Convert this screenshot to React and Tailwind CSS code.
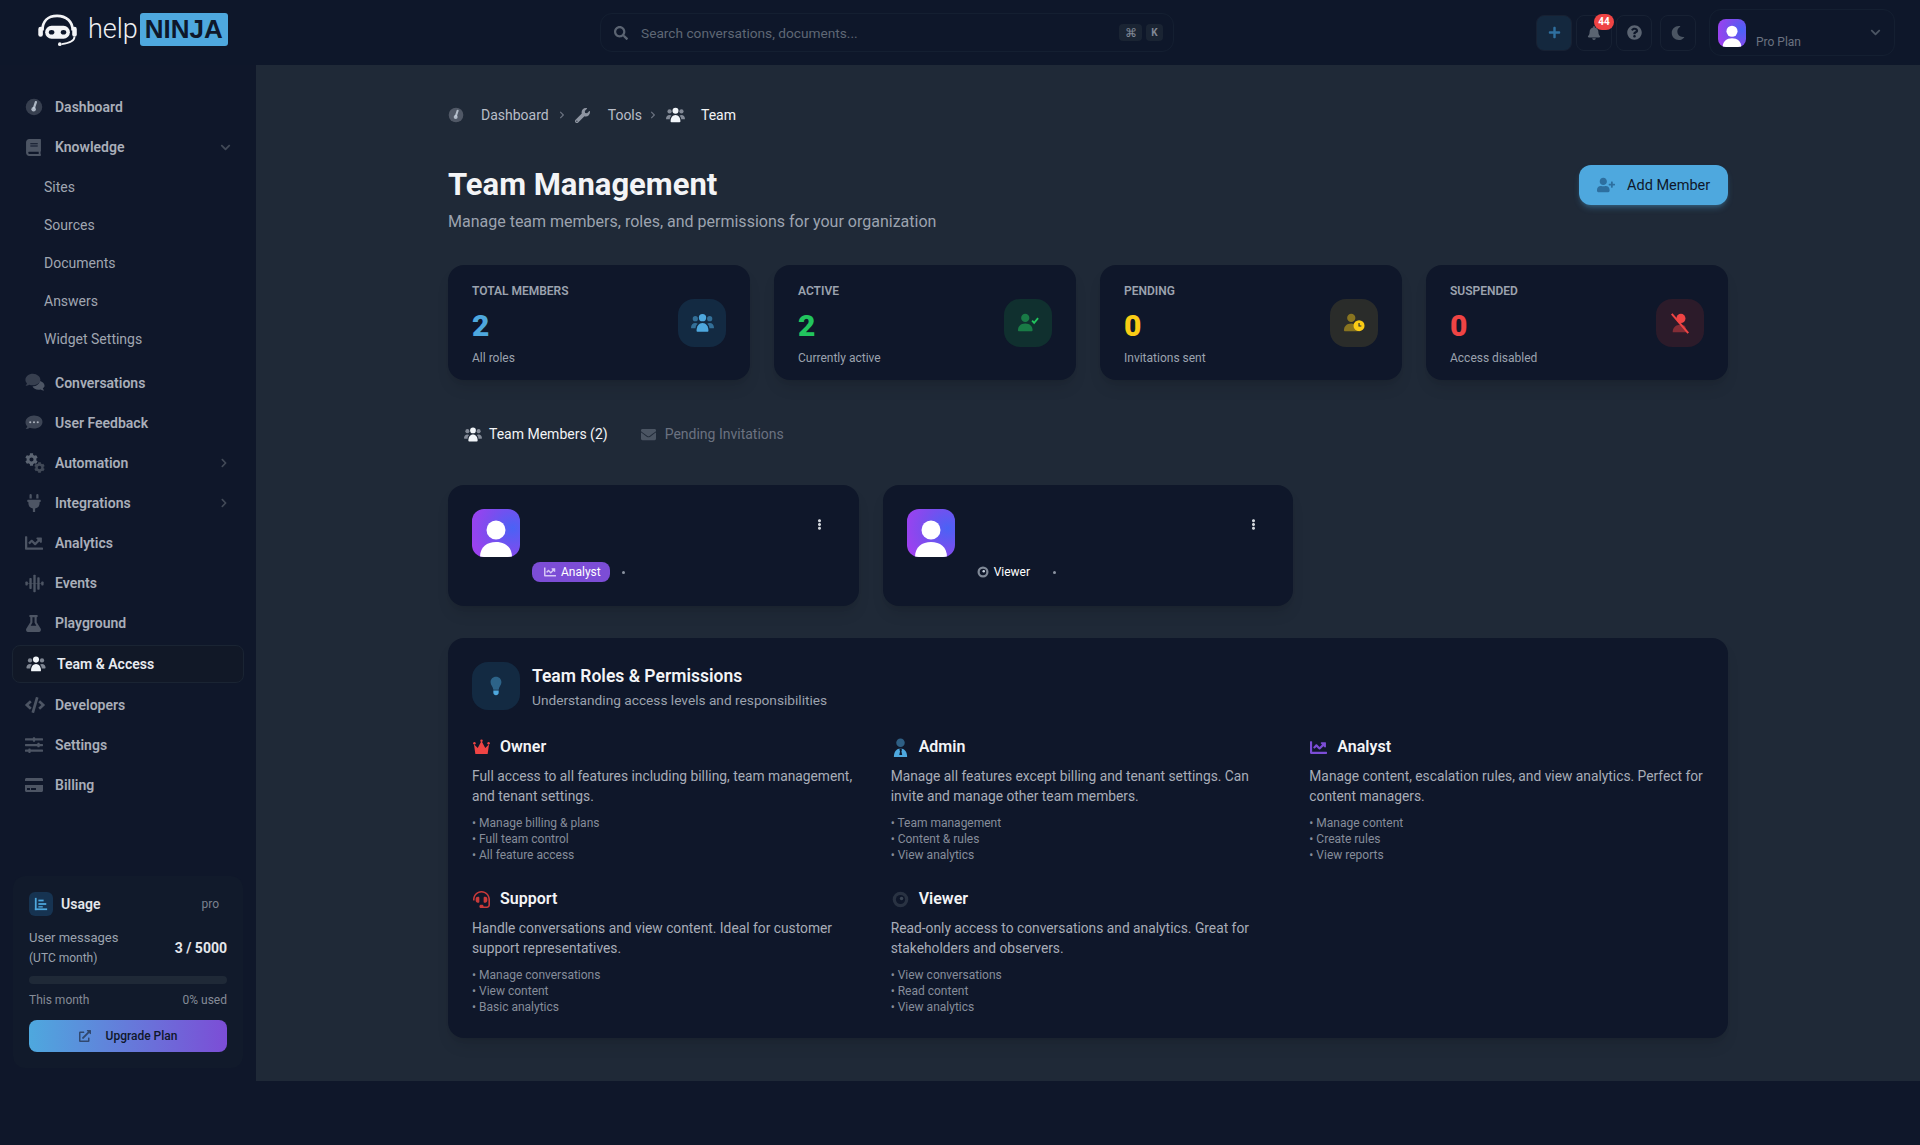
import React from 'react';
import {
  FaBook,
  FaChartLine,
  FaChevronDown,
  FaChevronRight,
  FaCode,
  FaCog,
  FaCreditCard,
  FaEllipsisV,
  FaEnvelope,
  FaExternalLinkAlt,
  FaFlask,
  FaHeadset,
  FaMoon,
  FaPlug,
  FaPlus,
  FaQuestionCircle,
  FaSearch,
  FaSlidersH,
  FaUserPlus,
  FaWrench,
  FaBell,
} from 'react-icons/fa';

const Gauge = ({ className }) => (
  <svg viewBox="0 0 24 24" className={className}>
    <circle cx="12" cy="12" r="11" fill="currentColor" opacity="0.65" />
    <path d="M14.5 5.5 12 13" stroke="#cbd5e1" strokeWidth="3" strokeLinecap="round" opacity="0.8" />
    <circle cx="11.5" cy="15" r="3" fill="#cbd5e1" opacity="0.8" />
  </svg>
);

const UsersDuo = ({ className, main = 'currentColor', side = 'currentColor', sideOpacity = 0.55 }) => (
  <svg viewBox="0 0 24 20" className={className}>
    <g fill={side} opacity={sideOpacity}>
      <circle cx="4.5" cy="5.5" r="2.7" />
      <circle cx="19.5" cy="5.5" r="2.7" />
      <path d="M0 15c0-3 2-5 4.5-5 1 0 1.800.300 2.500.800C5.500 12 4.800 13.500 4.800 15.500H1c-.6 0-1-.000-1-.500z" />
      <path d="M24 15c0-3-2-5-4.500-5-1 0-1.800.300-2.500.800 1.500 1.200 2.200 2.700 2.200 4.700H23c.6 0 1-.000 1-.500z" />
    </g>
    <g fill={main}>
      <circle cx="12" cy="4.500" r="3.800" />
      <path d="M5.800 18c0-4.500 2.500-8 6.200-8s6.200 3.500 6.200 8c0 .800-.400 1.200-1.200 1.200H7c-.800 0-1.200-.400-1.200-1.200z" />
    </g>
  </svg>
);

const Waveform = ({ className }) => (
  <svg viewBox="0 0 24 24" className={className} fill="currentColor">
    <rect x="0.500" y="9.500" width="3" height="5" rx="1" />
    <rect x="5.500" y="5" width="3" height="14" rx="1" />
    <rect x="10.500" y="1" width="3" height="22" rx="1" />
    <rect x="15.500" y="4" width="3" height="16" rx="1" />
    <rect x="20.500" y="9.500" width="3" height="5" rx="1" />
    <rect x="1" y="11.300" width="22" height="1.400" opacity="0.5" />
  </svg>
);

const Comments = ({ className }) => (
  <svg viewBox="0 0 24 24" className={className} fill="currentColor">
    <path d="M9.500 1C4.500 1 .500 4.200.500 8.200c0 1.700.700 3.200 1.900 4.400-.400 1.100-1.400 2.300-1.900 2.800 1.800 0 3.500-.700 4.500-1.400 1.300.500 2.900.800 4.500.800 5 0 9-3.200 9-6.600S14.500 1 9.500 1z" opacity="0.65" />
    <path d="M23.500 15.500c0-3-2.500-5.300-5.500-6-.700 3.500-4.400 6.300-9 6.500 1 2.500 3.800 4.200 7 4.200 1 0 2-.200 2.900-.500.900.700 2.600 1.300 4.100 1.300-.500-.600-1.400-1.700-1.600-2.600 1.300-.900 2.100-2.400 2.100-2.900z" />
  </svg>
);

const Feedback = ({ className }) => (
  <svg viewBox="0 0 24 24" className={className}>
    <path d="M12 2C5.700 2 .700 6 .700 11c0 2.100.900 4 2.400 5.500-.500 1.500-1.700 2.900-2.400 3.500 2.300 0 4.300-.900 5.600-1.800 1.700.700 3.600 1.100 5.700 1.100 6.300 0 11.300-4 11.300-8.800S18.300 2 12 2z" fill="currentColor" opacity="0.75" />
    <circle cx="7" cy="11" r="1.400" fill="#aab0bb" />
    <circle cx="12" cy="11" r="1.400" fill="#aab0bb" />
    <circle cx="17" cy="11" r="1.400" fill="#aab0bb" />
  </svg>
);

const Cogs = () => (
  <span className="relative block size-[20px]">
    <FaCog className="absolute top-0 left-0 size-[13px] text-[#5b6472]" />
    <FaCog className="absolute right-0 bottom-0 size-[11px] text-[#414957]" />
  </span>
);

const UserCheck = ({ className }) => (
  <svg viewBox="0 0 24 20" className={className}>
    <g fill="#22c55e" opacity="0.5">
      <circle cx="9" cy="5" r="4.500" />
      <path d="M1 18.500C1 14 4 11 9 11s8 3 8 7.500c0 .600-.400 1-1 1H2c-.600 0-1-.400-1-1z" />
    </g>
    <path d="m16.500 8 2.200 2.400 4.300-5.200" stroke="#22c55e" strokeWidth="2" fill="none" />
  </svg>
);

const UserClock = ({ className }) => (
  <svg viewBox="0 0 24 20" className={className}>
    <g fill="#facc15" opacity="0.45">
      <circle cx="9" cy="5" r="4.500" />
      <path d="M1 18.500C1 14 4 11 9 11s8 3 8 7.500c0 .600-.400 1-1 1H2c-.600 0-1-.400-1-1z" />
    </g>
    <circle cx="17.500" cy="13.500" r="6" fill="#facc15" />
    <path d="M17.500 10.500v3.300h2.500" stroke="#1f2937" strokeWidth="1.200" fill="none" />
  </svg>
);

const UserSlash = ({ className }) => (
  <svg viewBox="0 0 24 24" className={className}>
    <circle cx="13" cy="7" r="5" fill="#ef4444" />
    <path d="M4 22c0-5 3.500-8 8.500-8 2 0 3.700.500 5 1.400L20 22z" fill="#ef4444" opacity="0.45" />
    <path d="M3 2l18 21" stroke="#ef4444" strokeWidth="2.200" />
  </svg>
);

const Crown = ({ className }) => (
  <svg viewBox="0 0 18 18" className={className} fill="#ef4444">
    <path d="M1 5.500 5 9.500 9 2l4 7.500 4-4L15.500 16h-13z" />
    <circle cx="1.500" cy="4.500" r="1.300" />
    <circle cx="9" cy="1.800" r="1.300" />
    <circle cx="16.500" cy="4.500" r="1.300" />
  </svg>
);

const UserTie = ({ className }) => (
  <svg viewBox="0 0 18 20" className={className}>
    <circle cx="9" cy="5" r="4.500" fill="#4ea8de" opacity="0.5" />
    <path d="M2 20c0-6 3-9 7-9s7 3 7 9z" fill="#4ea8de" />
    <path d="M8 11h2l.500 2-.500 1 .800 4H7.700l.800-4-.500-1z" fill="#0f172a" />
  </svg>
);

const Bulb = ({ className }) => (
  <svg viewBox="0 0 16 24" className={className}>
    <path d="M8 1C4 1 1.500 4 1.500 7.500c0 3.500 2.800 5 3.300 9h6.400c.500-4 3.300-5.500 3.300-9C14.500 4 12 1 8 1z" fill="#4ea8de" opacity="0.45" />
    <path d="M4.800 17.500h6.400v2.500c0 1.600-1.400 3-3.200 3s-3.200-1.400-3.200-3z" fill="#4ea8de" />
  </svg>
);

const ViewerEye = ({ className, iris = '#0f172a', ring = 'currentColor' }) => (
  <svg viewBox="0 0 24 24" className={className}>
    <circle cx="12" cy="12" r="11" fill={ring} opacity="0.6" />
    <circle cx="12" cy="12" r="6.500" fill={iris} />
    <circle cx="13.500" cy="10.500" r="2.500" fill={ring} />
  </svg>
);

const Avatar = ({ className }) => (
  <div className={`relative overflow-hidden bg-[radial-gradient(circle_at_85%_40%,#4a62f5_0%,#7c4dee_50%,#a83df0_100%)] ${className}`}>
    <svg viewBox="0 0 48 48" className="size-full">
      <ellipse cx="24" cy="21" rx="9.500" ry="9.500" fill="#fff" />
      <path d="M8 48c0-10 7-15 16-15s16 5 16 15z" fill="#fff" />
    </svg>
  </div>
);

const navTop = [
  { label: 'Dashboard', icon: <Gauge className="size-[18px]" /> },
  { label: 'Knowledge', icon: <FaBook className="size-[17px]" />, chevron: 'down' },
];

const subItems = ['Sites', 'Sources', 'Documents', 'Answers', 'Widget Settings'];

const navMiddle = [
  { label: 'Conversations', icon: <Comments className="size-[20px]" /> },
  { label: 'User Feedback', icon: <Feedback className="size-[18px]" /> },
  { label: 'Automation', icon: <Cogs />, chevron: 'right' },
  { label: 'Integrations', icon: <FaPlug className="size-[18px]" />, chevron: 'right' },
  { label: 'Analytics', icon: <FaChartLine className="size-[18px]" /> },
  { label: 'Events', icon: <Waveform className="size-[19px]" /> },
  { label: 'Playground', icon: <FaFlask className="size-[17px]" /> },
];

const navBottom = [
  { label: 'Developers', icon: <FaCode className="size-[20px]" /> },
  { label: 'Settings', icon: <FaSlidersH className="size-[18px]" /> },
  { label: 'Billing', icon: <FaCreditCard className="size-[18px]" /> },
];

const stats = [
  { label: 'Total Members', value: '2', sub: 'All roles', color: 'text-[#4ea8de]', box: 'bg-[#132a42]', icon: <UsersDuo className="w-[23px] h-[20px] text-[#4ea8de]" /> },
  { label: 'Active', value: '2', sub: 'Currently active', color: 'text-[#22c55e]', box: 'bg-[#10302f]', icon: <UserCheck className="w-[22px] h-[19px]" /> },
  { label: 'Pending', value: '0', sub: 'Invitations sent', color: 'text-[#facc15]', box: 'bg-[#2a2c2a]', icon: <UserClock className="w-[22px] h-[19px]" /> },
  { label: 'Suspended', value: '0', sub: 'Access disabled', color: 'text-[#ef4444]', box: 'bg-[#2c1b2a]', icon: <UserSlash className="size-[22px]" /> },
];

const roles = [
  {
    name: 'Owner',
    icon: <Crown className="size-[17px]" />,
    desc: 'Full access to all features including billing, team management,\nand tenant settings.',
    perms: ['Manage billing & plans', 'Full team control', 'All feature access'],
  },
  {
    name: 'Admin',
    icon: <UserTie className="h-[19px] w-[17px]" />,
    desc: 'Manage all features except billing and tenant settings. Can\ninvite and manage other team members.',
    perms: ['Team management', 'Content & rules', 'View analytics'],
  },
  {
    name: 'Analyst',
    icon: <FaChartLine className="size-[17px] text-[#7c4dd6]" />,
    desc: 'Manage content, escalation rules, and view analytics. Perfect for\ncontent managers.',
    perms: ['Manage content', 'Create rules', 'View reports'],
  },
  {
    name: 'Support',
    icon: <FaHeadset className="size-[17px] text-[#c93a3a]" />,
    desc: 'Handle conversations and view content. Ideal for customer\nsupport representatives.',
    perms: ['Manage conversations', 'View content', 'Basic analytics'],
  },
  {
    name: 'Viewer',
    icon: <ViewerEye className="size-[17px] text-[#3b4554]" />,
    desc: 'Read-only access to conversations and analytics. Great for\nstakeholders and observers.',
    perms: ['View conversations', 'Read content', 'View analytics'],
  },
];

const NavItem = ({ item }) => (
  <div className="flex h-10 items-center pl-[25px] pr-[20px] text-sm font-semibold text-[#a9aeb9]">
    <span className="flex w-[30px] shrink-0 items-center text-[#4d5564]">{item.icon}</span>
    <span>{item.label}</span>
    {item.chevron === 'down' && <FaChevronDown className="ml-auto mr-[5px] size-[11px] text-[#414957]" />}
    {item.chevron === 'right' && <FaChevronRight className="ml-auto mr-[7px] size-[10px] text-[#414957]" />}
  </div>
);

const Sidebar = () => (
  <aside className="flex w-64 shrink-0 flex-col pt-[22px] pb-[13px]">
    {navTop.map((item) => (
      <NavItem key={item.label} item={item} />
    ))}
    <div className="mt-px">
      {subItems.map((label) => (
        <div key={label} className="flex h-[38px] items-center pl-11 text-sm text-[#a0a6b1]">
          {label}
        </div>
      ))}
    </div>
    <div className="mt-[5px]">
      {navMiddle.map((item) => (
        <NavItem key={item.label} item={item} />
      ))}
    </div>
    <div className="mx-3 mt-[2px] mb-[2px] flex h-[38px] items-center rounded-lg border border-[#1a2433] bg-[#111827] pl-3 text-sm font-semibold text-[#e8ebf0]">
      <UsersDuo className="mr-[10px] h-[16px] w-[22px]" main="#f1f5f9" side="#9ca3af" sideOpacity={0.8} />
      <span>Team &amp; Access</span>
    </div>
    {navBottom.map((item) => (
      <NavItem key={item.label} item={item} />
    ))}

    <div className="mx-[13px] mt-auto rounded-xl bg-[#111a2b] p-4">
      <div className="flex items-center">
        <span className="flex size-6 items-center justify-center rounded-md bg-[#163351]">
          <svg viewBox="0 0 16 16" className="size-[14px]" fill="#4ea8de">
            <rect x="1" y="1" width="2" height="14" />
            <rect x="1" y="13" width="14" height="2" />
            <rect x="5" y="3" width="6" height="2" />
            <rect x="5" y="7" width="9" height="2" />
            <rect x="5" y="10.500" width="5" height="1.500" />
          </svg>
        </span>
        <span className="ml-2 text-sm font-semibold text-[#e5e7eb]">Usage</span>
        <span className="ml-auto pr-2 text-xs text-[#7b818e]">pro</span>
      </div>
      <div className="mt-3 flex items-center justify-between">
        <div>
          <div className="text-[13px] leading-[20px] text-[#9ca3af]">User messages</div>
          <div className="text-xs leading-[20px] text-[#9ca3af]">(UTC month)</div>
        </div>
        <div className="text-sm font-bold text-[#e5e7eb]">3 / 5000</div>
      </div>
      <div className="mt-2 h-2 rounded-full bg-[#1f2937]" />
      <div className="mt-2 flex justify-between text-xs leading-4 text-[#858b97]">
        <span>This month</span>
        <span>0% used</span>
      </div>
      <button className="mt-3 flex h-8 w-full items-center justify-center gap-[15px] rounded-lg bg-[linear-gradient(90deg,#4ea8de,#7c4dd6)] text-xs font-medium text-[#0f172a]">
        <FaExternalLinkAlt className="size-3 text-[#31486e]" />
        Upgrade Plan
      </button>
    </div>
  </aside>
);

const IconBox = ({ children, className = '' }) => (
  <div className={`relative flex size-9 items-center justify-center rounded-lg border border-[#172133] ${className}`}>
    {children}
  </div>
);

const Header = () => (
  <header className="flex h-[65px] items-center bg-[#0e172a] pl-[37px] pr-[25px]">
    <div className="mb-[7px] flex w-[563px] shrink-0 items-center">
      <svg viewBox="0 0 44 36" className="h-[33px] w-[42px]">
        <path d="M5 19C5 9 11 3 21 3s17 6 17 16" fill="none" stroke="#f3f4f6" strokeWidth="3" />
        <rect x="0.500" y="15" width="5" height="11" rx="2.500" fill="#f3f4f6" />
        <rect x="37.500" y="15" width="5" height="11" rx="2.500" fill="#f3f4f6" />
        <rect x="8" y="14" width="27" height="14" rx="7" fill="#f3f4f6" />
        <ellipse cx="15" cy="21" rx="3" ry="2.500" fill="#0e172a" />
        <ellipse cx="28" cy="21" rx="3" ry="2.500" fill="#0e172a" />
        <path d="M40 26c0 5-6 7-14 8" fill="none" stroke="#f3f4f6" strokeWidth="2" />
        <circle cx="24" cy="34" r="2" fill="#f3f4f6" />
      </svg>
      <span className="ml-[9px] text-[27px] leading-none font-light text-[#eef0f3]">help</span>
      <span className="ml-[2px] flex h-[33px] w-[88px] items-center justify-center rounded-[3px] bg-[#4ea8de] font-['Liberation_Sans',sans-serif] text-[26px] font-bold text-[#0e172a]">
        NINJA
      </span>
    </div>
    <div className="flex h-[39px] w-[574px] shrink-0 items-center rounded-xl border border-[#141f31] pr-[10px] pl-[13px]">
      <FaSearch className="size-[14px] text-[#5b6472]" />
      <span className="mt-px ml-[13px] text-[13.7px] text-[#5f6775]">Search conversations, documents...</span>
      <span className="ml-auto flex h-[17px] w-[23px] items-center justify-center rounded bg-[#1a2433] text-xs text-[#818896]">⌘</span>
      <span className="ml-1 flex h-[17px] w-[17px] items-center justify-center rounded bg-[#1a2433] text-[10px] font-bold text-[#818896]">K</span>
    </div>
    <div className="ml-auto flex items-center">
      <IconBox className="border-[#1f4360] bg-[#14283e]">
        <FaPlus className="size-[13px] text-[#2f6f9f]" />
      </IconBox>
      <IconBox className="ml-1">
        <FaBell className="size-[14px] text-[#5b6472]" />
        <span className="absolute -top-[2px] -right-[3px] flex h-4 w-5 items-center justify-center rounded-full bg-[#ef4444] text-[10px] font-bold text-white">
          44
        </span>
      </IconBox>
      <IconBox className="ml-1">
        <FaQuestionCircle className="size-[15px] text-[#5b6472]" />
      </IconBox>
      <IconBox className="ml-2">
        <FaMoon className="size-[14px] text-[#4b5563]" />
      </IconBox>
      <div className="ml-[13px] flex h-[47px] w-[186px] items-center rounded-xl border border-[#141f31] pr-[13px] pl-2">
        <Avatar className="size-7 rounded-lg" />
        <span className="mt-[18px] ml-[10px] text-xs text-[#6b7280]">Pro Plan</span>
        <FaChevronDown className="ml-auto size-[11px] text-[#4b5563]" />
      </div>
    </div>
  </header>
);

const Breadcrumb = () => (
  <nav className="flex h-9 items-center text-sm text-[#b8bdc7]">
    <Gauge className="size-4 text-[#6b7280]" />
    <span className="ml-[17px]">Dashboard</span>
    <FaChevronRight className="ml-[9px] size-2 text-[#6b7280]" />
    <FaWrench className="ml-[9px] size-[15px] text-[#8e95a1]" />
    <span className="ml-[18px]">Tools</span>
    <FaChevronRight className="ml-[7px] size-2 text-[#6b7280]" />
    <UsersDuo className="ml-[9px] h-[16px] w-[19px]" main="#f1f5f9" side="#9ca3af" sideOpacity={0.8} />
    <span className="ml-[16px] text-[#f3f4f6]">Team</span>
  </nav>
);

const StatCard = ({ stat }) => (
  <div className="flex h-[115px] items-center justify-between rounded-2xl bg-[#0f172a] px-6 shadow-lg">
    <div className="pt-[3px]">
      <div className="text-xs leading-4 font-semibold text-[#9ca3af] uppercase">{stat.label}</div>
      <div className={`mt-[9px] text-3xl leading-9 font-black ${stat.color}`}>{stat.value}</div>
      <div className="mt-[6px] text-xs leading-4 text-[#9ca3af]">{stat.sub}</div>
    </div>
    <div className={`flex size-12 items-center justify-center rounded-2xl ${stat.box}`}>{stat.icon}</div>
  </div>
);

const MemberCard = ({ badge }) => (
  <div className="relative h-[121px] rounded-2xl bg-[#0f172a] p-6 shadow-lg">
    <Avatar className="size-12 rounded-xl" />
    <FaEllipsisV className="absolute top-[34px] right-[34px] size-[11px] text-[#d1d5db]" />
    <div className="mt-[5px] ml-[60px] flex h-5 items-center">
      {badge}
      <span className="ml-3 size-[3px] rounded-full bg-[#8b93a1]" />
    </div>
  </div>
);

const RoleCard = ({ role }) => (
  <div>
    <div className="mt-px flex h-6 items-center text-base font-semibold text-[#f3f4f6]">
      <span className="flex w-[28px] shrink-0 items-center pl-px">{role.icon}</span>
      {role.name}
    </div>
    <p className="mt-[7px] text-[13.8px] leading-5 whitespace-pre text-[#a8adb8]">{role.desc}</p>
    <ul className="mt-[9px] text-xs leading-4 text-[#868d9a]">
      {role.perms.map((perm) => (
        <li key={perm}>• {perm}</li>
      ))}
    </ul>
  </div>
);

const App = () => {
  return (
    <div className="min-h-[1145px] bg-[#0f172a] font-['Roboto',sans-serif] text-white">
      <Header />
      <div className="flex">
        <Sidebar />
        <main className="min-w-0 flex-1 bg-[#1f2937] pt-8 pb-[43px]">
          <div className="mx-auto max-w-7xl">
            <Breadcrumb />
            <div className="mt-[34px] flex items-start justify-between">
              <div>
                <h1 className="text-[31px] leading-9 font-bold text-[#f3f4f6]">Team Management</h1>
                <p className="mt-[7px] text-base leading-6 text-[#9ca3af]">
                  Manage team members, roles, and permissions for your organization
                </p>
              </div>
              <button className="mt-[-2px] flex h-10 w-[149px] items-center rounded-xl bg-[#4ea8de] pl-[18px] text-[14.5px] text-[#0f172a] shadow-md shadow-[#4ea8de]/30">
                <FaUserPlus className="size-[18px] text-[#2d6f9f]" />
                <span className="ml-3 mt-px">Add Member</span>
              </button>
            </div>

            <div className="mt-[31px] grid grid-cols-4 gap-6">
              {stats.map((stat) => (
                <StatCard key={stat.label} stat={stat} />
              ))}
            </div>

            <div className="mt-[34px] flex h-10 items-center pl-[16px] text-sm">
              <UsersDuo className="h-[15px] w-[18px]" main="#f1f5f9" side="#9ca3af" sideOpacity={0.8} />
              <span className="ml-[7px] text-[#f3f4f6]">Team Members (2)</span>
              <FaEnvelope className="ml-[33px] size-[15px] text-[#4b5563]" />
              <span className="ml-[9px] text-[#6b7280]">Pending Invitations</span>
            </div>

            <div className="mt-[31px] grid grid-cols-3 gap-6">
              <MemberCard
                badge={
                  <span className="flex h-5 w-[78px] items-center gap-[5px] rounded-lg bg-[#7c4dd6] px-3 text-xs text-white">
                    <FaChartLine className="size-3 shrink-0 text-[#d6c6f5]" />
                    Analyst
                  </span>
                }
              />
              <MemberCard
                badge={
                  <span className="flex h-5 w-[74px] items-center gap-[5px] px-[10px] text-xs text-white">
                    <ViewerEye className="size-3 shrink-0 text-[#cbd5e1]" />
                    Viewer
                  </span>
                }
              />
            </div>

            <section className="mt-[32px] rounded-2xl bg-[#0f172a] px-6 pt-6 pb-[23px] shadow-lg">
              <div className="flex items-center">
                <div className="flex size-12 items-center justify-center rounded-2xl bg-[#132a42]">
                  <Bulb className="h-[20px] w-[14px]" />
                </div>
                <div className="ml-3">
                  <h2 className="text-[17.5px] leading-7 font-semibold text-[#f3f4f6]">Team Roles &amp; Permissions</h2>
                  <p className="text-[13.7px] leading-5 text-[#9ca3af]">Understanding access levels and responsibilities</p>
                </div>
              </div>
              <div className="mt-6 grid grid-cols-3 gap-x-6 gap-y-[23px]">
                {roles.map((role) => (
                  <RoleCard key={role.name} role={role} />
                ))}
              </div>
            </section>
          </div>
        </main>
      </div>
    </div>
  );
};

export default App;
